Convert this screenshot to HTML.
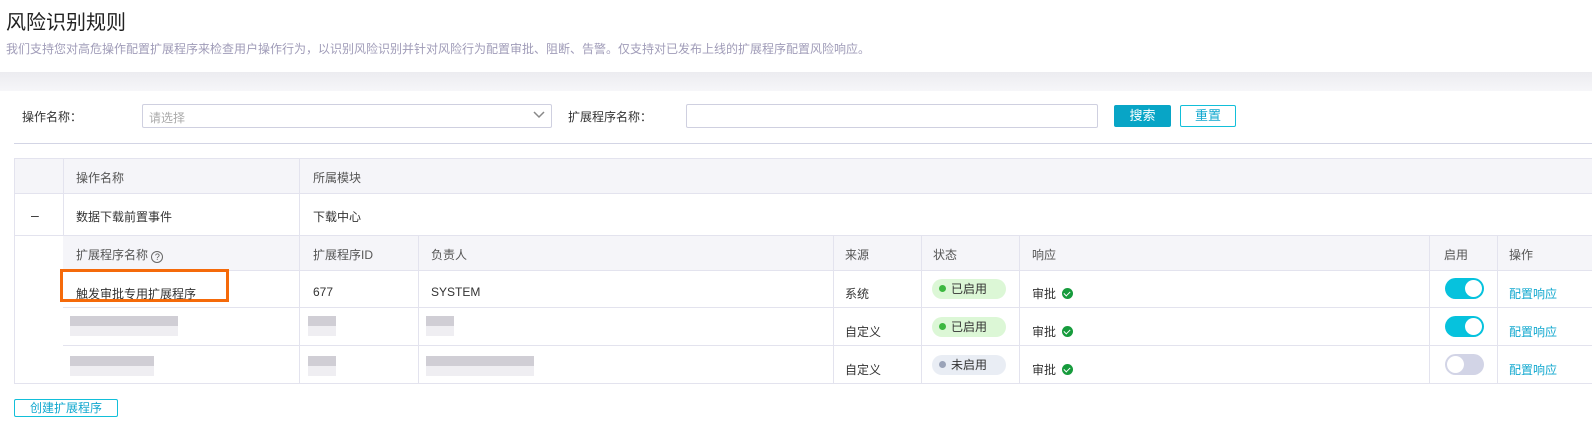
<!DOCTYPE html>
<html><head><meta charset="utf-8"><style>
*{margin:0;padding:0;box-sizing:border-box}
body{width:1592px;height:433px;background:#fff;font-family:"Liberation Sans","Noto Sans CJK SC",sans-serif;position:relative;overflow:hidden;color:#333;font-size:12px}
.a{position:absolute;white-space:nowrap}
.hl{position:absolute;height:1px;background:#e3e3ee}
.vl{position:absolute;width:1px;background:#e3e3ee}
.th{color:#555;font-size:12px}
.tag{position:absolute;width:74px;height:20px;border-radius:10px;font-size:12px;line-height:20px;padding-left:19px;color:#333}
.tag:before{content:"";position:absolute;left:7px;top:6px;width:7px;height:7px;border-radius:50%}
.on{background:#dcf7d6}.on:before{background:#3cb83f}
.off{background:#e9edf4}.off:before{background:#9aa3b8}
.ok{display:inline-block;width:11px;height:11px;border-radius:50%;background:#169b3c;vertical-align:-1px;margin-left:6px;position:relative}
.ok:after{content:"";position:absolute;left:3px;top:2px;width:3px;height:5px;border:solid #fff;border-width:0 1.5px 1.5px 0;transform:rotate(45deg)}
.sw{position:absolute;width:39px;height:21px;border-radius:11px}
.sw i{position:absolute;top:2px;width:17px;height:17px;border-radius:50%;background:#fff}
.lk{color:#12a8cf}
.blur{position:absolute;height:20px;background:linear-gradient(#d0ced5 0,#d0ced5 50%,#efeef2 50%,#efeef2 100%)}
.r1{top:285px}.r2{top:323px}.r3{top:361px}
</style></head><body>
<div class="a" style="left:6px;top:6px;font-size:20px;color:#222">风险识别规则</div>
<div class="a" style="left:6px;top:40px;font-size:12px;color:#a09cb8">我们支持您对高危操作配置扩展程序来检查用户操作行为，以识别风险识别并针对风险行为配置审批、阻断、告警。仅支持对已发布上线的扩展程序配置风险响应。</div>
<div class="a" style="left:0;top:72px;width:1592px;height:19px;background:linear-gradient(#ececf0,#f6f6f9)"></div>

<div class="a" style="left:22px;top:108px;color:#333">操作名称：</div>
<div class="a" style="left:142px;top:104px;width:410px;height:24px;border:1px solid #cfd0e0;border-radius:2px"></div>
<div class="a" style="left:149px;top:109px;color:#aaa">请选择</div>
<svg class="a" style="left:533px;top:111px" width="12" height="8"><path d="M1 1L6 6L11 1" stroke="#888" stroke-width="1.5" fill="none"/></svg>
<div class="a" style="left:568px;top:108px">扩展程序名称：</div>
<div class="a" style="left:686px;top:104px;width:412px;height:24px;border:1px solid #cfd0e0;border-radius:2px"></div>
<div class="a" style="left:1114px;top:105px;width:57px;height:22px;background:#08a5c6;border-radius:2px;color:#fff;text-align:center;line-height:22px;font-size:13px">搜索</div>
<div class="a" style="left:1180px;top:105px;width:56px;height:22px;border:1px solid #12bfd9;border-radius:2px;color:#12a8cf;text-align:center;line-height:20px;font-size:13px">重置</div>
<div class="hl" style="left:14px;top:143px;width:1578px;background:#d3d5e5"></div>

<div class="a" style="left:14px;top:158px;width:1578px;height:35px;background:#f5f5f9"></div>
<div class="a" style="left:63px;top:235px;width:1529px;height:35px;background:#f5f5f9"></div>
<div class="hl" style="left:14px;top:158px;width:1578px"></div>
<div class="hl" style="left:14px;top:193px;width:1578px"></div>
<div class="hl" style="left:14px;top:235px;width:1578px"></div>
<div class="hl" style="left:63px;top:270px;width:1529px"></div>
<div class="hl" style="left:63px;top:307px;width:1529px"></div>
<div class="hl" style="left:63px;top:345px;width:1529px"></div>
<div class="hl" style="left:14px;top:383px;width:1578px"></div>
<div class="vl" style="left:14px;top:158px;height:226px"></div>
<div class="vl" style="left:63px;top:158px;height:77px"></div>
<div class="vl" style="left:299px;top:158px;height:226px"></div>
<div class="vl" style="left:418px;top:235px;height:149px"></div>
<div class="vl" style="left:833px;top:235px;height:149px"></div>
<div class="vl" style="left:921px;top:235px;height:149px"></div>
<div class="vl" style="left:1019px;top:235px;height:149px"></div>
<div class="vl" style="left:1429px;top:235px;height:149px"></div>
<div class="vl" style="left:1497px;top:235px;height:149px"></div>

<div class="a th" style="left:76px;top:169px">操作名称</div>
<div class="a th" style="left:313px;top:169px">所属模块</div>
<div class="a" style="left:31px;top:207px;font-size:14px">–</div>
<div class="a" style="left:76px;top:208px">数据下载前置事件</div>
<div class="a" style="left:313px;top:208px">下载中心</div>

<div class="a th" style="left:76px;top:246px">扩展程序名称 <span style="display:inline-block;width:12px;height:12px;border:1px solid #666;border-radius:50%;font-size:9px;line-height:10px;text-align:center;vertical-align:-1px">?</span></div>
<div class="a th" style="left:313px;top:246px">扩展程序ID</div>
<div class="a th" style="left:431px;top:246px">负责人</div>
<div class="a th" style="left:845px;top:246px">来源</div>
<div class="a th" style="left:933px;top:246px">状态</div>
<div class="a th" style="left:1032px;top:246px">响应</div>
<div class="a th" style="left:1444px;top:246px">启用</div>
<div class="a th" style="left:1509px;top:246px">操作</div>

<div class="a" style="left:60px;top:269px;width:169px;height:33px;border:3px solid #f56a0a"></div>
<div class="a r1" style="left:76px">触发审批专用扩展程序</div>
<div class="a r1" style="left:313px">677</div>
<div class="a r1" style="left:431px">SYSTEM</div>

<div class="blur" style="left:70px;top:316px;width:108px"></div>
<div class="blur" style="left:308px;top:316px;width:28px"></div>
<div class="blur" style="left:426px;top:316px;width:28px"></div>
<div class="blur" style="left:70px;top:356px;width:84px"></div>
<div class="blur" style="left:308px;top:356px;width:28px"></div>
<div class="blur" style="left:426px;top:356px;width:108px"></div>

<div class="a r1" style="left:845px">系统</div>
<div class="a r2" style="left:845px">自定义</div>
<div class="a r3" style="left:845px">自定义</div>
<div class="tag on" style="left:932px;top:279px">已启用</div>
<div class="tag on" style="left:932px;top:317px">已启用</div>
<div class="tag off" style="left:932px;top:355px">未启用</div>
<div class="a r1" style="left:1032px">审批<span class="ok"></span></div>
<div class="a r2" style="left:1032px">审批<span class="ok"></span></div>
<div class="a r3" style="left:1032px">审批<span class="ok"></span></div>
<div class="sw" style="left:1445px;top:278px;background:#06c2dd"><i style="left:20px"></i></div>
<div class="sw" style="left:1445px;top:316px;background:#06c2dd"><i style="left:20px"></i></div>
<div class="sw" style="left:1445px;top:354px;background:#d2d4e6"><i style="left:2px"></i></div>
<div class="a lk r1" style="left:1509px">配置响应</div>
<div class="a lk r2" style="left:1509px">配置响应</div>
<div class="a lk r3" style="left:1509px">配置响应</div>

<div class="a" style="left:14px;top:399px;width:104px;height:18px;border:1px solid #12bfd9;border-radius:2px;color:#12a8cf;text-align:center;line-height:16px">创建扩展程序</div>
</body></html>
